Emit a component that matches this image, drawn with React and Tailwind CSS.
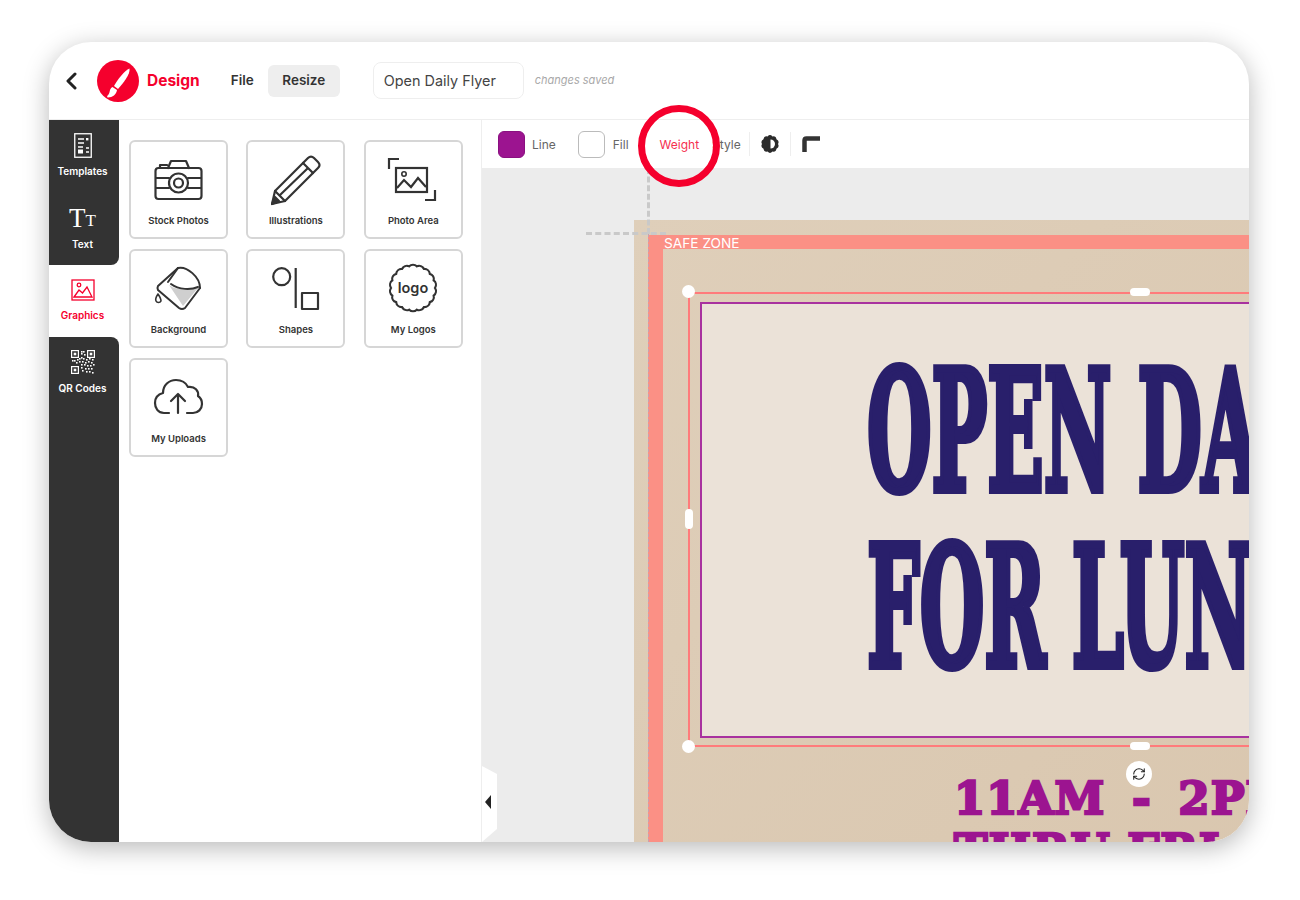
import { RefreshCw } from "lucide-react";

const stroke = { fill: "none", stroke: "#333", strokeWidth: 2.2, strokeLinecap: "round", strokeLinejoin: "round" };

// wavy ring for the logo badge and the contrast icon
const scallop = (cx, cy, r, n, bulge) => {
  let d = "";
  for (let i = 0; i <= n; i++) {
    const a = (i / n) * Math.PI * 2;
    const x = (cx + r * Math.cos(a)).toFixed(2);
    const y = (cy + r * Math.sin(a)).toFixed(2);
    d += i === 0 ? `M${x} ${y}` : ` A${bulge} ${bulge} 0 0 1 ${x} ${y}`;
  }
  return d + "Z";
};

const CameraIcon = () => (
  <svg width="60" height="60" viewBox="0 0 60 60" {...stroke}>
    <rect x="6.5" y="18" width="46" height="31" rx="3" />
    <path d="M19 18l3-7h15l3 7M11 18v-3h7" />
    <path d="M7 28h13M39 28h13M7 38h13M39 38h13" />
    <circle cx="29.5" cy="33" r="9.5" />
    <circle cx="29.5" cy="33" r="4.5" />
  </svg>
);

const PencilIcon = () => (
  <svg width="60" height="60" viewBox="0 0 60 60" {...stroke}>
    <path d="M6 54L9 41L42 8Q45 5 48 8L52 12Q55 15 52 18L19 51Z" />
    <path d="M37 13L47 23M9 41L19 51M14 45L42 18" />
    <path d="M6 54L9 47L13 51Z" fill="#333" />
  </svg>
);

const PhotoAreaIcon = () => (
  <svg width="60" height="60" viewBox="0 0 60 60" {...stroke} strokeLinecap="butt" strokeLinejoin="miter">
    <path d="M16 9H6V19M42 50H52V40" />
    <rect x="13" y="18" width="31" height="24" />
    <circle cx="21" cy="24" r="2.2" strokeWidth="1.6" />
    <path d="M14 38L21 30L28 37L35 28L43 37" />
  </svg>
);

const BucketIcon = () => (
  <svg width="60" height="60" viewBox="0 0 60 60" {...stroke} strokeWidth="2">
    <path d="M20 26C28 32 40 31 49 29L34 47Z" fill="#cfcfcf" stroke="none" />
    <path d="M29 9L9 27Q8 29 9 31L30 49Q33 51 36 49L51 29" />
    <path d="M29 9C38 7 51 18 51 29" />
    <path d="M29 9L19 23" />
    <path d="M22 25C30 31 42 31 49 28" />
    <path d="M9 35C7 38 6 40 7 42C8 44 11 44 12 42C12 40 11 38 9 35Z" strokeWidth="1.6" />
  </svg>
);

const ShapesIcon = () => (
  <svg width="60" height="60" viewBox="0 0 60 60" {...stroke} strokeLinecap="butt">
    <circle cx="15.7" cy="17.7" r="8.5" />
    <path d="M29.7 9V49" />
    <rect x="36" y="34" width="16" height="16" />
  </svg>
);

const LogoBadgeIcon = () => (
  <svg width="60" height="60" viewBox="0 0 60 60">
    <path d={scallop(30, 29, 22, 18, 5.5)} fill="none" stroke="#333" strokeWidth="2.2" />
    <text x="30" y="33.5" textAnchor="middle" fontSize="14.5" fontWeight="600" fill="#333">logo</text>
  </svg>
);

const UploadIcon = () => (
  <svg width="60" height="60" viewBox="0 0 60 60" {...stroke}>
    <path d="M20 45H15C9 45 6 40 6 35C6 29 10 26 14 25C14 17 20 12 27 12C33 12 37 15 39 19C46 18 50 23 49 28C52 30 53 33 53 36C53 41 49 45 44 45H38" />
    <path d="M29 45V26M22 33L29 26L36 33" />
  </svg>
);

const tools = [
  ["Stock Photos", CameraIcon],
  ["Illustrations", PencilIcon],
  ["Photo Area", PhotoAreaIcon],
  ["Background", BucketIcon],
  ["Shapes", ShapesIcon],
  ["My Logos", LogoBadgeIcon],
  ["My Uploads", UploadIcon],
];

const qrDots = [
  [10, 1], [12, 1], [10, 3], [13, 4], [1, 10], [3, 10], [6, 9], [8, 8], [10, 7], [12, 8], [15, 9], [18, 8], [21, 9],
  [5, 12], [8, 11], [11, 11], [14, 12], [17, 11], [20, 12], [10, 14], [13, 14], [16, 15], [19, 15], [22, 14],
  [10, 17], [14, 18], [17, 18], [20, 18], [11, 20], [15, 21], [18, 21], [21, 22],
];

const QrIcon = () => (
  <svg width="24" height="24" viewBox="0 0 24 24">
    {[[0, 0], [16, 0], [0, 16]].map(([x, y], i) => (
      <g key={i}>
        <rect x={x + 0.6} y={y + 0.6} width="6.8" height="6.8" fill="none" stroke="#fff" strokeWidth="1.2" />
        <rect x={x + 2.7} y={y + 2.7} width="2.6" height="2.6" fill="#fff" />
      </g>
    ))}
    {qrDots.map(([x, y], i) => (
      <rect key={i} x={x} y={y} width="1.6" height="1.6" fill="#fff" />
    ))}
  </svg>
);

function SideItem({ label, active, children }) {
  return (
    <div className={`flex flex-col items-center h-[72.5px] pt-[12px] pr-[3px] ${active ? "text-[#f5002d]" : "text-white"}`}>
      <div className="h-[26px] flex items-center justify-center">{children}</div>
      <span className={`${active ? "mt-[5px]" : "mt-[6px]"} text-[10px] font-semibold leading-[14px]`}>{label}</span>
    </div>
  );
}

export default function App() {
  return (
    <div className="w-[1300px] h-[900px] bg-white pl-[49px] pt-[42px] overflow-hidden [font-family:Inter,'Noto_Sans',sans-serif]">
      <div className="w-[1200px] h-[800px] rounded-[42px] bg-white overflow-hidden flex flex-col shadow-[0_6px_26px_rgba(0,0,0,0.28)]">
        {/* top bar */}
        <header className="h-[78px] shrink-0 flex items-center border-b border-[#eeeeee]">
          <svg className="ml-[15px]" width="14" height="18" viewBox="0 0 14 18" fill="none" stroke="#222" strokeWidth="3" strokeLinecap="round" strokeLinejoin="round">
            <path d="M11 2L4 9L11 16" />
          </svg>
          <div className="ml-[19px] w-[42px] h-[42px] rounded-full bg-[#f5002d]">
            <svg width="42" height="42" viewBox="0 0 42 42" fill="#fff">
              <path d="M32.5 8.5C28 10 20.5 19.5 17 26L21 29C26.5 23 33.5 14 32.5 8.5Z" />
              <path d="M15.5 27C12 29 13.5 32 11.5 34.5C10 36 9.5 37.5 11 37.5C15.5 37.5 19.5 34.5 20 30Z" />
            </svg>
          </div>
          <span className="ml-[8px] text-[15.5px] font-bold text-[#f5002d]">Design</span>
          <span className="ml-[31px] text-[13.5px] font-semibold text-[#333]">File</span>
          <span className="ml-[14px] w-[72px] h-[32px] rounded-md bg-[#eeeeee] flex items-center justify-center text-[13.5px] font-semibold text-[#333]">Resize</span>
          <div className="ml-[33px] w-[151px] h-[37px] border border-[#eeeeee] rounded-lg flex items-center pl-[10px] text-[14.4px] text-[#444]">Open Daily Flyer</div>
          <span className="ml-[11px] text-[11px] italic text-[#a8a8a8]">changes saved</span>
        </header>

        <div className="flex-1 flex min-h-0">
          {/* left rail */}
          <aside className="w-[70px] shrink-0 flex flex-col bg-white">
            <div className="bg-[#333333] rounded-br-lg h-[145px]">
              <SideItem label="Templates">
                <svg width="18" height="25" viewBox="0 0 18 25" fill="none" stroke="#fff">
                  <rect x="0.75" y="0.75" width="16.5" height="23.5" strokeWidth="1.3" />
                  <path d="M4 6h6M4 10h6M4 14h5M12 15h3M12 19h3" strokeWidth="1.3" />
                  <rect x="12" y="5" width="2.4" height="2.4" fill="#fff" stroke="none" />
                  <rect x="4" y="16.5" width="5" height="4" fill="#fff" stroke="none" />
                </svg>
              </SideItem>
              <SideItem label="Text">
                <div className="flex items-end [font-family:'Liberation_Serif',serif] leading-none text-white">
                  <span className="text-[27px] leading-[24px]">T</span>
                  <span className="text-[17px] leading-[19px]">T</span>
                </div>
              </SideItem>
            </div>
            <div className="h-[72px]">
              <SideItem label="Graphics" active>
                <svg width="24" height="22" viewBox="0 0 24 22" fill="none" stroke="#f5002d" strokeWidth="1.3">
                  <rect x="1" y="1" width="22" height="20" />
                  <circle cx="8" cy="6" r="1.8" />
                  <path d="M3 18L8 11L11.5 14L16 8L21 18Z" />
                </svg>
              </SideItem>
            </div>
            <div className="flex-1 bg-[#333333] rounded-tr-lg">
              <SideItem label="QR Codes">
                <QrIcon />
              </SideItem>
            </div>
          </aside>

          {/* graphics panel */}
          <section className="w-[363px] shrink-0 border-r border-[#eeeeee] pl-[10px] pt-[20px]">
            <div className="grid grid-cols-[repeat(3,99px)] auto-rows-[99px] gap-x-[18.4px] gap-y-[10px]">
              {tools.map(([label, Icon]) => (
                <div key={label} className="border-2 border-[#d6d6d6] rounded-md flex flex-col items-center pt-[8px]">
                  <Icon />
                  <span className="mt-[5px] text-[9.5px] font-semibold leading-[12px] text-[#333]">{label}</span>
                </div>
              ))}
            </div>
          </section>

          <main className="flex-1 flex flex-col min-w-0 relative">
            {/* shape toolbar */}
            <div className="h-[48px] shrink-0 flex items-center pl-[16px] text-[12px] text-[#666]">
              <span className="w-[27px] h-[27px] rounded-md bg-[#9c1490] border border-[#8a1080]" />
              <span className="ml-[7px] pt-[1px]">Line</span>
              <span className="ml-[22px] w-[27px] h-[27px] rounded-md bg-white border border-[#bbbbbb]" />
              <span className="ml-[8px] pt-[1px]">Fill</span>
              <span className="ml-[31px] pt-[1px] text-[#f5304f]">Weight</span>
              <span className="ml-[13px] pt-[1px]">Style</span>
              <span className="ml-[8px] w-px h-[24px] bg-[#eeeeee]" />
              <svg className="ml-[10px]" width="20" height="20" viewBox="0 0 20 20">
                <path d={scallop(10, 10, 8, 10, 3.4)} fill="#2b2b2b" />
                <path d="M10.5 5.5A4.5 4.5 0 0 1 10.5 14.5Z" fill="#fff" />
              </svg>
              <span className="ml-[10px] w-px h-[24px] bg-[#eeeeee]" />
              <svg className="ml-[10px]" width="20" height="20" viewBox="0 0 20 20" fill="none" stroke="#333" strokeWidth="4.5">
                <path d="M3.5 18V6.5Q3.5 4.5 5.5 4.5H19" />
              </svg>
            </div>

            {/* artboard: everything in here sits on a free canvas */}
            <div className="flex-1 relative bg-[#ececec] overflow-hidden">
              <div className="absolute left-[152px] top-[52px] w-[700px] h-[700px] bg-gradient-to-br from-[#dfcfba] to-[#d9c6ae] overflow-hidden">
                <div className="absolute left-[14px] top-[15px] right-0 h-[14px] bg-[#fb9085] text-white text-[13.7px] leading-[16px] pl-[16px]">SAFE ZONE</div>
                <div className="absolute left-[14px] top-[15px] bottom-0 w-[15px] bg-[#fb9085]" />
                <div className="absolute left-[66px] top-[82px] w-[800px] h-[436px] bg-[#ebe2d8] border-2 border-[#a8329f]" />
                <div className="absolute left-[54px] top-[72px] w-[800px] h-[455px] border-2 border-[#ff7b7b]" />

                <div className="absolute left-[233px] top-[122px] origin-left scale-x-[0.444] whitespace-nowrap [font-family:DejaVu_Serif,serif] font-bold text-[167px] leading-[178px] text-[#291f6b] [-webkit-text-stroke:8px_#291f6b]">OPEN DAILY</div>
                <div className="absolute left-[233px] top-[298px] origin-left scale-x-[0.444] whitespace-nowrap [font-family:DejaVu_Serif,serif] font-bold text-[167px] leading-[178px] text-[#291f6b] [-webkit-text-stroke:8px_#291f6b]">FOR LUNCH</div>

                <div className="absolute left-[320px] top-[549px] whitespace-nowrap [font-family:DejaVu_Serif,serif] font-bold text-[45px] leading-[60px] tracking-[1px] [word-spacing:10px] text-[#9c1490] [-webkit-text-stroke:2.5px_#9c1490]">11AM - 2PM</div>
                <div className="absolute left-[320px] top-[601px] whitespace-nowrap [font-family:DejaVu_Serif,serif] font-bold text-[45px] leading-[60px] tracking-[1px] text-[#9c1490] [-webkit-text-stroke:2.5px_#9c1490]">THRU FRI</div>

                <span className="absolute left-[48px] top-[65px] w-[13px] h-[13px] rounded-full bg-white" />
                <span className="absolute left-[48px] top-[520px] w-[13px] h-[13px] rounded-full bg-white" />
                <span className="absolute left-[496px] top-[68px] w-[20px] h-[8px] rounded-full bg-white" />
                <span className="absolute left-[496px] top-[522px] w-[20px] h-[8px] rounded-full bg-white" />
                <span className="absolute left-[51px] top-[289px] w-[8px] h-[20px] rounded-full bg-white" />
                <span className="absolute left-[492px] top-[541px] w-[26px] h-[26px] rounded-full bg-white flex items-center justify-center">
                  <RefreshCw size={14} color="#222" strokeWidth={1.8} />
                </span>
              </div>
              <div className="absolute left-[165px] top-0 h-[66px] w-0 border-l-[3px] border-dashed border-[#c9c9c9]" />
              <div className="absolute left-[104px] top-[64px] w-[80px] h-0 border-t-[3px] border-dashed border-[#c9c9c9]" />
              <div className="absolute left-[166px] top-[66px] bottom-0 w-0 border-l border-dashed border-[#c9a0b0]" />
              {/* panel collapse tab */}
              <svg className="absolute left-0 bottom-0" width="16" height="76" viewBox="0 0 16 76">
                <path d="M0 0L15 8V63L0 76Z" fill="#fff" />
                <path d="M3 36L9 29V43Z" fill="#222" />
              </svg>
            </div>

            {/* callout ring around Weight */}
            <div className="absolute left-[156px] top-[-15px] w-[82px] h-[82px] rounded-full border-[7px] border-[#f5002d]" />
          </main>
        </div>
      </div>
    </div>
  );
}
